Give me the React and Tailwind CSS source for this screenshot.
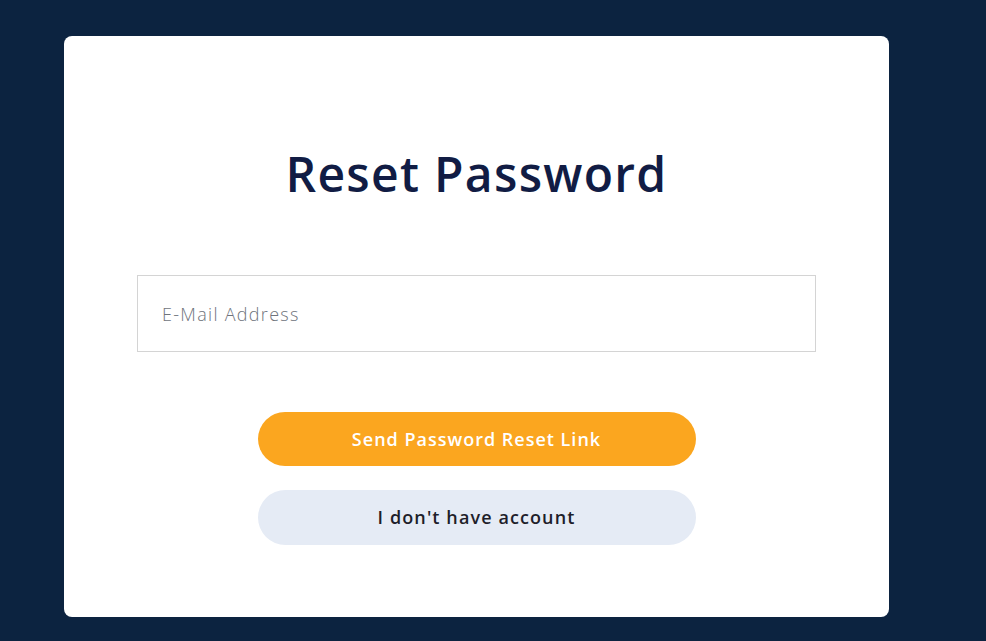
export default function App() {
  return (
    <div className="min-h-[641px] w-full bg-[#0c2340] pt-[36px] pl-[64px] pb-[24px]" style={{ fontFamily: '"Open Sans", "Noto Sans", sans-serif' }}>
      <div className="w-[825px] h-[581px] rounded-[8px] bg-white px-[73px] pt-[109px] flex flex-col items-center">
        <h1 className="text-[48px] leading-[58px] font-semibold text-[#111c44] tracking-[1.3px]">Reset Password</h1>
        <input
          type="email"
          placeholder="E-Mail Address"
          className="mt-[72px] w-[679px] h-[77px] border border-[#d4d4d4] px-[24px] text-[18px] font-light tracking-[1.3px] text-[#333] placeholder:text-[#6f747c] outline-none"
        />
        <button className="mt-[60px] w-[438px] h-[54px] rounded-full bg-[#fba61f] text-white text-[18px] font-semibold tracking-[1px]">
          Send Password Reset Link
        </button>
        <button className="mt-[24px] w-[438px] h-[55px] rounded-full bg-[#e5ebf5] text-[#1e1e2a] text-[18px] font-semibold tracking-[1.1px]">
          I don't have account
        </button>
      </div>
    </div>
  );
}
